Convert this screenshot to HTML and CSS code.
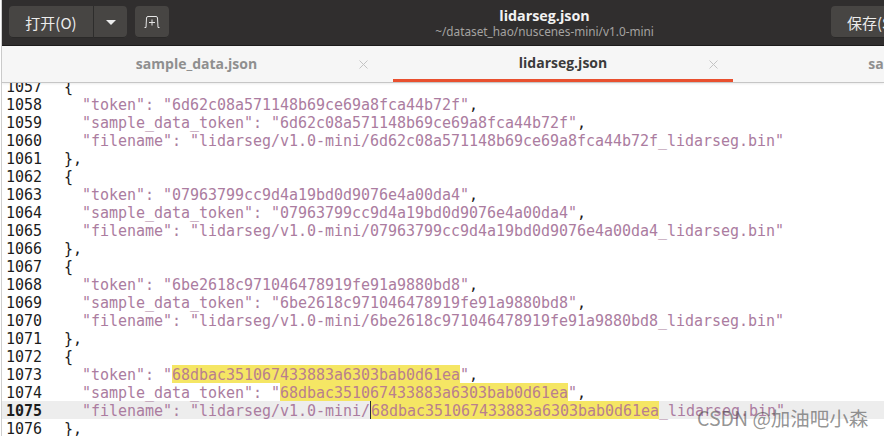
FILE: index.html
```html
<!DOCTYPE html>
<html lang="zh">
<head>
<meta charset="utf-8">
<title>lidarseg.json</title>
<link rel="stylesheet" href="styles.css">
</head>
<body>
<div class="window">
  <header class="titlebar">
    <div class="group">
      <div class="split">
        <button class="btn btn-open">打开(O)</button>
        <button class="btn btn-arrow"><span class="caret"></span></button>
      </div>
      <button class="btn btn-new">
        <svg width="16" height="12" viewBox="0 0 16 12" fill="none" stroke="#e6e6e6" stroke-width="1"><path d="M0.5 11.5h1.5l.5-9.5q.1-1.500 1.500-1.500h8q1.400 0 1.500 1.500l.5 9.500h1.500"/><path d="M8 3.500v6M5 6.500h6"/></svg>
      </button>
    </div>
    <div class="title">
      <div class="title-main">lidarseg.json</div>
      <div class="title-sub">~/dataset_hao/nuscenes-mini/v1.0-mini</div>
    </div>
    <button class="btn btn-save">保存(S)</button>
  </header>
  <nav class="tabs">
    <div class="tab tab-one"><span class="tab-label">sample_data.json</span><svg class="tab-x" width="9" height="9" viewBox="0 0 9 9" fill="none" stroke="#c4c4c4"><path d="M.5.5l8 8M8.500.5l-8 8"/></svg></div>
    <div class="tab tab-active"><span class="tab-label">lidarseg.json</span><svg class="tab-x" width="9" height="9" viewBox="0 0 9 9" fill="none" stroke="#c4c4c4"><path d="M.5.5l8 8M8.500.5l-8 8"/></svg></div>
    <div class="tab tab-more"><span class="tab-label">sample_data.json</span></div>
  </nav>
  <main class="editor">
    <div class="row"><span class="ln">1057</span><span class="c">  {</span></div>
    <div class="row"><span class="ln">1058</span><span class="c">    <i>"token": "6d62c08a571148b69ce69a8fca44b72f"</i>,</span></div>
    <div class="row"><span class="ln">1059</span><span class="c">    <i>"sample_data_token": "6d62c08a571148b69ce69a8fca44b72f"</i>,</span></div>
    <div class="row"><span class="ln">1060</span><span class="c">    <i>"filename": "lidarseg/v1.0-mini/6d62c08a571148b69ce69a8fca44b72f_lidarseg.bin"</i></span></div>
    <div class="row"><span class="ln">1061</span><span class="c">  },</span></div>
    <div class="row"><span class="ln">1062</span><span class="c">  {</span></div>
    <div class="row"><span class="ln">1063</span><span class="c">    <i>"token": "07963799cc9d4a19bd0d9076e4a00da4"</i>,</span></div>
    <div class="row"><span class="ln">1064</span><span class="c">    <i>"sample_data_token": "07963799cc9d4a19bd0d9076e4a00da4"</i>,</span></div>
    <div class="row"><span class="ln">1065</span><span class="c">    <i>"filename": "lidarseg/v1.0-mini/07963799cc9d4a19bd0d9076e4a00da4_lidarseg.bin"</i></span></div>
    <div class="row"><span class="ln">1066</span><span class="c">  },</span></div>
    <div class="row"><span class="ln">1067</span><span class="c">  {</span></div>
    <div class="row"><span class="ln">1068</span><span class="c">    <i>"token": "6be2618c971046478919fe91a9880bd8"</i>,</span></div>
    <div class="row"><span class="ln">1069</span><span class="c">    <i>"sample_data_token": "6be2618c971046478919fe91a9880bd8"</i>,</span></div>
    <div class="row"><span class="ln">1070</span><span class="c">    <i>"filename": "lidarseg/v1.0-mini/6be2618c971046478919fe91a9880bd8_lidarseg.bin"</i></span></div>
    <div class="row"><span class="ln">1071</span><span class="c">  },</span></div>
    <div class="row"><span class="ln">1072</span><span class="c">  {</span></div>
    <div class="row"><span class="ln">1073</span><span class="c">    <i>"token": "<mark>68dbac351067433883a6303bab0d61ea</mark>"</i>,</span></div>
    <div class="row"><span class="ln">1074</span><span class="c">    <i>"sample_data_token": "<mark>68dbac351067433883a6303bab0d61ea</mark>"</i>,</span></div>
    <div class="row row-current"><span class="ln">1075</span><span class="c">    <i>"filename": "lidarseg/v1.0-mini/<span class="cursor"></span><mark>68dbac351067433883a6303bab0d61ea</mark>_lidarseg.bin"</i></span></div>
    <div class="row"><span class="ln">1076</span><span class="c">  },</span></div>
  </main>
  <div class="watermark">CSDN @加油吧小森</div>
</div>
</body>
</html>
```
FILE: styles.css
```css
* { box-sizing: border-box; }
html, body { margin: 0; padding: 0; width: 884px; height: 436px; overflow: hidden; background: #fff; }
.window { position: relative; width: 884px; height: 436px; padding-left: 2px; overflow: hidden; display: flex; flex-direction: column; background: linear-gradient(90deg, #fff 1px, #cfcfcf 1px, #cfcfcf 2px, #fff 2px); }

.titlebar { flex: none; height: 46px; background: #302e2e; border-bottom: 1px solid #1d1c1c; display: flex; align-items: flex-start; padding: 6px 0 0 7px; }
.group { flex: none; width: 320px; display: flex; gap: 8px; }
.split { display: flex; }
.btn { height: 32px; margin: 0; padding: 0; border: 0; background: #474543; color: #ececec; font: 15px "Noto Sans CJK SC", "Noto Sans", sans-serif; display: flex; align-items: center; justify-content: center; border-radius: 4px; box-shadow: inset 0 -1px 0 #2a2928; }
.btn-open { width: 84px; border-radius: 4px 0 0 4px; }
.btn-arrow { width: 34px; border-radius: 0 4px 4px 0; border-left: 1px solid #2e2d2c; }
.caret { width: 0; height: 0; border-left: 5px solid transparent; border-right: 5px solid transparent; border-top: 5px solid #ececec; }
.btn-new { width: 34px; }
.title { flex: none; width: 431px; text-align: center; margin-top: 2px; font-family: "Noto Sans", sans-serif; }
.title-main { font-family: "Open Sans", "Noto Sans", sans-serif; font-weight: 700; font-size: 14.3px; line-height: 15px; color: #f2f2f2; }
.title-sub { font-size: 11.8px; line-height: 16px; color: #a5a3a1; }
.btn-save { flex: none; width: 80px; margin-left: 71px; border-radius: 4px 0 0 4px; justify-content: flex-start; padding-left: 16px; }

.tabs { flex: none; height: 37px; background: #f6f6f6; display: flex; border-bottom: 1px solid #c6c6c6; box-shadow: 0 1px 2px rgba(0,0,0,.08); position: relative; z-index: 1; overflow: hidden; }
.tab { flex: none; height: 36px; position: relative; display: flex; align-items: center; justify-content: center; font: 700 14px "Open Sans", "Noto Sans", sans-serif; color: #8f8f8f; padding-bottom: 2px; }
.tab-one { width: 391px; padding-right: 2px; }
.tab-active { width: 340px; color: #3b3b3b; border-bottom: 3px solid #e9502f; padding-bottom: 0; }
.tab-more { width: 392px; }
.tab-x { position: absolute; top: 14px; }
.tab-one .tab-x { right: 25px; }
.tab-active .tab-x { right: 15px; }

.editor { flex: 1; margin-top: -6px; font: 15px/20px "DejaVu Sans Mono", monospace; letter-spacing: -0.03px; color: #1a1a1a; }
.row { display: flex; height: 18px; white-space: pre; }
.row-current { background: #ededed; }
.ln { flex: none; width: 44px; padding-left: 4px; color: #1c1c1c; }
.row-current .ln { font-weight: 700; }
.c { flex: none; }
.c i { font-style: normal; color: #ab7ca0; }
mark { display: inline-block; height: 18px; background: #f5e664; color: #b97f8e; }
.cursor { display: inline-block; width: 1px; height: 18px; background: #2a2a3c; vertical-align: top; }
.watermark { position: absolute; left: 697px; top: 406px; font: 19.5px/24px "Noto Sans CJK SC", "Noto Sans", sans-serif; color: rgba(70,70,70,.58); white-space: nowrap; }
```
